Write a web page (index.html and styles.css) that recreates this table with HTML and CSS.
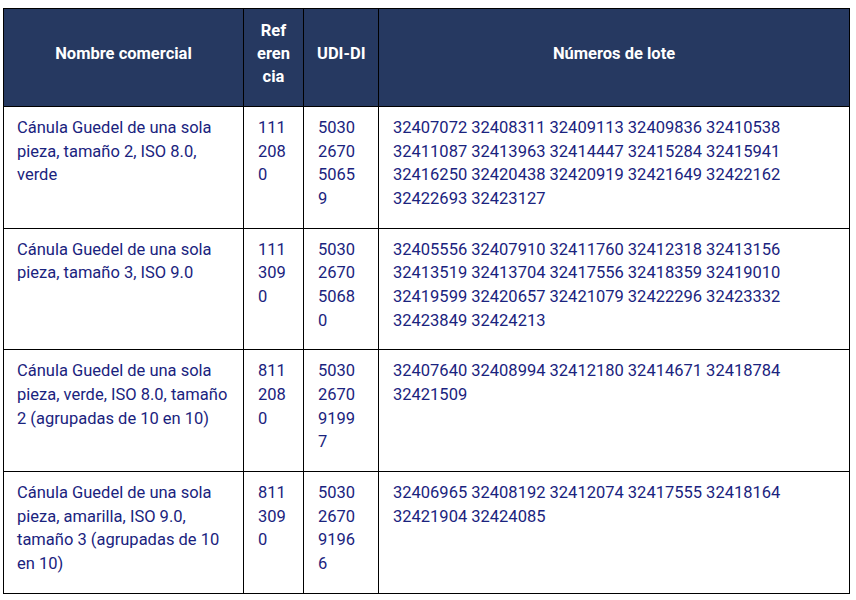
FILE: index.html
```html
<!DOCTYPE html>
<html lang="es">
<head>
<meta charset="utf-8">
<title>Cánula Guedel</title>
<link rel="stylesheet" href="styles.css">
</head>
<body>
<table class="lots">
  <colgroup>
    <col class="c-name">
    <col class="c-ref">
    <col class="c-udi">
    <col class="c-lot">
  </colgroup>
  <thead>
    <tr>
      <th>Nombre comercial</th>
      <th class="brk">Referencia</th>
      <th class="nowrap">UDI-DI</th>
      <th>Números de lote</th>
    </tr>
  </thead>
  <tbody>
    <tr>
      <td class="name">Cánula Guedel de una sola pieza, tamaño 2, ISO 8.0, verde</td>
      <td class="brk">1112080</td>
      <td class="brk">5030267050659</td>
      <td>32407072 32408311 32409113 32409836 32410538 32411087 32413963 32414447 32415284 32415941 32416250 32420438 32420919 32421649 32422162 32422693 32423127</td>
    </tr>
    <tr>
      <td class="name">Cánula Guedel de una sola pieza, tamaño 3, ISO 9.0</td>
      <td class="brk">1113090</td>
      <td class="brk">5030267050680</td>
      <td>32405556 32407910 32411760 32412318 32413156 32413519 32413704 32417556 32418359 32419010 32419599 32420657 32421079 32422296 32423332 32423849 32424213</td>
    </tr>
    <tr>
      <td class="name">Cánula Guedel de una sola pieza, verde, ISO 8.0, tamaño 2 (agrupadas de 10 en 10)</td>
      <td class="brk">8112080</td>
      <td class="brk">5030267091997</td>
      <td>32407640 32408994 32412180 32414671 32418784 32421509</td>
    </tr>
    <tr>
      <td class="name">Cánula Guedel de una sola pieza, amarilla, ISO 9.0, tamaño 3 (agrupadas de 10 en 10)</td>
      <td class="brk">8113090</td>
      <td class="brk">5030267091966</td>
      <td>32406965 32408192 32412074 32417555 32418164 32421904 32424085</td>
    </tr>
  </tbody>
</table>
</body>
</html>
```

FILE: styles.css
```css
html, body {
  margin: 0;
  padding: 0;
  background: #ffffff;
}

body {
  padding: 8px 0 0 3px;
  font-family: Roboto, "Liberation Sans", sans-serif;
  font-size: 16.5px;
  line-height: 23.67px;
  color: #1a237e;
}

.lots {
  width: 846px;
  border-collapse: collapse;
  table-layout: fixed;
  border: 1px solid #000;
}

.c-name { width: 240px; }
.c-ref { width: 60px; }
.c-udi { width: 75px; }
.c-lot { width: 471px; }

.lots th,
.lots td {
  border: 1px solid #000;
}

.lots th {
  background: #263961;
  color: #ffffff;
  font-weight: 700;
  text-align: center;
  vertical-align: middle;
  padding: 10px 13px 18px;
  line-height: 23px;
}

.lots td {
  text-align: left;
  vertical-align: top;
  padding: 9px 15px 17px 14px;
}

.lots td.name {
  padding-left: 13px;
  padding-right: 6px;
}

.brk {
  word-break: break-all;
}

.nowrap {
  white-space: nowrap;
}
```
